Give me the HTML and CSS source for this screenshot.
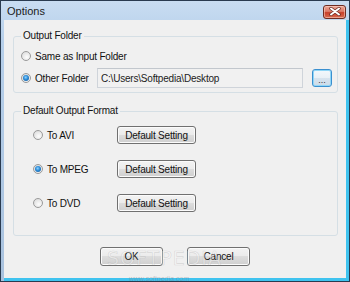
FILE: index.html
```html
<!DOCTYPE html>
<html lang="en">
<head>
    <meta charset="UTF-8">
    <title>Options</title>
    <link rel="stylesheet" href="styles.css">
</head>
<body>
    <div class="window">
        <div class="titlebar">
            <span class="title">Options</span>
            <button class="close-btn" type="button">
                <svg width="12" height="9" viewBox="0 0 12 9">
                    <path d="M2 1.5 L10 7.5 M10 1.5 L2 7.5" stroke="#6b2b23" stroke-width="3.4" stroke-linecap="round"/>
                    <path d="M2 1.5 L10 7.5 M10 1.5 L2 7.5" stroke="#fff" stroke-width="2" stroke-linecap="round"/>
                </svg>
            </button>
        </div>

        <div class="client">
            <fieldset class="group">
                <legend>Output Folder</legend>
                <div class="folder-rows">
                    <label class="radio-row">
                        <span class="radio"></span>
                        <span>Same as Input Folder</span>
                    </label>
                    <div class="folder-line">
                        <label class="radio-row">
                            <span class="radio checked"></span>
                            <span>Other Folder</span>
                        </label>
                        <input class="path-box" type="text" value="C:\Users\Softpedia\Desktop" readonly>
                        <button class="browse-btn" type="button">...</button>
                    </div>
                </div>
            </fieldset>

            <fieldset class="group format-group">
                <legend>Default Output Format</legend>
                <div class="format-rows">
                    <div class="format-line">
                        <label class="radio-row">
                            <span class="radio"></span>
                            <span>To AVI</span>
                        </label>
                        <button class="win-btn setting-btn" type="button">Default Setting</button>
                    </div>
                    <div class="format-line">
                        <label class="radio-row">
                            <span class="radio checked"></span>
                            <span>To MPEG</span>
                        </label>
                        <button class="win-btn setting-btn" type="button">Default Setting</button>
                    </div>
                    <div class="format-line">
                        <label class="radio-row">
                            <span class="radio"></span>
                            <span>To DVD</span>
                        </label>
                        <button class="win-btn setting-btn" type="button">Default Setting</button>
                    </div>
                </div>
            </fieldset>

            <div class="footer">
                <button class="win-btn footer-btn" type="button">OK</button>
                <button class="win-btn footer-btn" type="button">Cancel</button>
            </div>
        </div>

        <!-- screenshot watermark -->
        <span class="watermark">SOFTPEDIA</span>
        <span class="watermark-url">www.softpedia.com</span>
    </div>
</body>
</html>
```

FILE: styles.css
```css
* {
    margin: 0;
    padding: 0;
    box-sizing: border-box;
}

body {
    font-family: "Liberation Sans", Arial, sans-serif;
    font-size: 10px;
    letter-spacing: -0.2px;
    color: #111;
    background: #fff;
}

.window {
    position: relative;
    width: 350px;
    height: 282px;
    border: 1px solid #2a3b50;
    background: linear-gradient(#c9ddf2, #b6cfea 40px, #a9c2de);
    display: flex;
    flex-direction: column;
    overflow: hidden;
}

/* Title bar */
.titlebar {
    height: 19px;
    display: flex;
    align-items: center;
    justify-content: space-between;
    padding: 0 3px 0 6px;
}

.title {
    font-size: 11px;
    letter-spacing: 0;
    color: #1b1b1b;
}

.close-btn {
    width: 23px;
    height: 14px;
    margin-top: 2px;
    border: 1px solid #6e2c22;
    border-radius: 3px;
    background: linear-gradient(#eba696, #dc7b69 45%, #c8402a 55%, #d86a50);
    box-shadow: inset 0 0 0 1px rgba(255, 220, 210, 0.5);
    display: flex;
    align-items: center;
    justify-content: center;
}

/* Client area */
.client {
    flex: 1;
    margin-left: 3px;
    background: #f0f0f0;
    border-right: 3px solid #3fc3ef;
    border-bottom: 3px solid #3fc3ef;
    padding: 9px 8px 0 9px;
    display: flex;
    flex-direction: column;
}

.group {
    border: 1px solid #d5dfe5;
    border-radius: 3px;
    padding: 0 5px 4px 7px;
}

.group legend {
    line-height: 14px;
    padding: 0 2px;
    margin-left: 0;
    font-size: 10px;
}

.folder-rows {
    display: flex;
    flex-direction: column;
    gap: 5px;
    padding-top: 6px;
}

.radio-row {
    display: flex;
    align-items: center;
    gap: 4px;
    height: 14px;
    font-size: 10px;
}

.radio {
    width: 10px;
    height: 10px;
    border-radius: 50%;
    border: 1px solid #9a9a9a;
    background: radial-gradient(circle at 60% 65%, #fdfdfd, #e2e2e2 70%, #cfcfcf);
    display: flex;
    align-items: center;
    justify-content: center;
    flex-shrink: 0;
}

.radio.checked::after {
    content: "";
    width: 6px;
    height: 6px;
    border-radius: 50%;
    background: radial-gradient(circle at 45% 40%, #8fd3ff, #2a8ad6 45%, #114f8e);
}

.folder-line {
    display: flex;
    align-items: center;
    height: 20px;
}

.folder-line .radio-row {
    width: 76px;
}

.path-box {
    width: 206px;
    height: 20px;
    border: 1px solid #cfd4da;
    border-top-color: #c2c7cd;
    background: #f1f1f1;
    font-family: inherit;
    font-size: 10px;
    letter-spacing: -0.2px;
    color: #222;
    padding: 0 3px;
    outline: none;
}

.browse-btn {
    width: 20px;
    height: 18px;
    margin-left: 9px;
    border: 1px solid #3a8fcf;
    border-radius: 3px;
    background: linear-gradient(#f3f8fc, #e9f0f6 50%, #d7e3ee 50%, #cddbe8);
    box-shadow: inset 0 0 0 1px #8fd6f7;
    font-family: inherit;
    font-size: 9px;
    color: #333;
    line-height: 10px;
    padding-top: 4px;
}

/* Default output format group */
.format-group {
    margin-top: 11px;
    padding-bottom: 23px;
}

.format-rows {
    display: flex;
    flex-direction: column;
    gap: 16px;
    padding: 8px 0 0 12px;
}

.format-line {
    display: flex;
    align-items: center;
    height: 18px;
}

.format-line .radio-row {
    width: 84px;
}

.win-btn {
    border: 1px solid #707070;
    border-radius: 3px;
    background: linear-gradient(#f3f3f3, #ebebeb 50%, #dddddd 50%, #cfcfcf);
    box-shadow: inset 0 0 0 1px #fbfbfb;
    font-family: inherit;
    font-size: 10px;
    letter-spacing: -0.2px;
    color: #111;
}

.setting-btn {
    width: 79px;
    height: 18px;
}

.footer {
    display: flex;
    justify-content: center;
    gap: 24px;
    margin-top: 11px;
    padding-right: 1px;
}

.footer-btn {
    width: 63px;
    height: 19px;
}

/* watermark left on the original screenshot */
.watermark {
    position: absolute;
    left: 106px;
    top: 246px;
    font-family: "DejaVu Sans", sans-serif;
    font-size: 19px;
    letter-spacing: 1px;
    color: rgba(255, 255, 255, 0.35);
    -webkit-text-stroke: 0.6px rgba(150, 150, 150, 0.3);
    pointer-events: none;
}

.watermark-url {
    position: absolute;
    left: 128px;
    top: 274px;
    font-size: 7px;
    letter-spacing: 0;
    color: rgba(120, 130, 140, 0.45);
    pointer-events: none;
}
```
